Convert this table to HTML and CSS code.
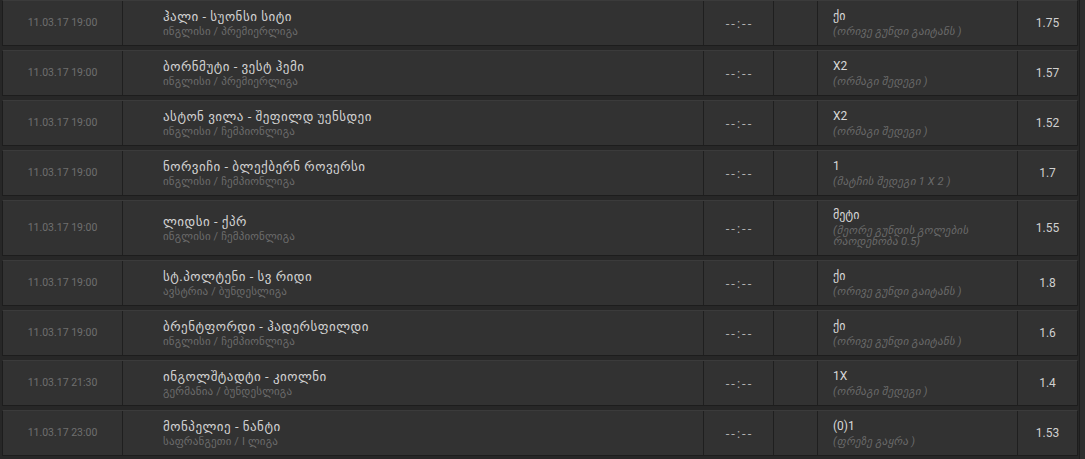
FILE: index.html
```html
<!DOCTYPE html>
<html lang="ka">
<head>
<meta charset="utf-8">
<title>Matches</title>
<link rel="stylesheet" href="styles.css">
</head>
<body>
<div class="page">
  <div class="table">
    <div class="row">
      <div class="cell date">11.03.17 19:00</div>
      <div class="cell match"><div class="teams">ჰალი - სუონსი სიტი</div><div class="league">ინგლისი / პრემიერლიგა</div></div>
      <div class="cell score">--:--</div>
      <div class="cell empty"></div>
      <div class="cell bet"><div class="pick">ქი</div><div class="desc">(ორივე გუნდი გაიტანს )</div></div>
      <div class="cell odds">1.75</div>
    </div>
    <div class="row">
      <div class="cell date">11.03.17 19:00</div>
      <div class="cell match"><div class="teams">ბორნმუტი - ვესტ ჰემი</div><div class="league">ინგლისი / პრემიერლიგა</div></div>
      <div class="cell score">--:--</div>
      <div class="cell empty"></div>
      <div class="cell bet"><div class="pick">X2</div><div class="desc">(ორმაგი შედეგი )</div></div>
      <div class="cell odds">1.57</div>
    </div>
    <div class="row">
      <div class="cell date">11.03.17 19:00</div>
      <div class="cell match"><div class="teams">ასტონ ვილა - შეფილდ უენსდეი</div><div class="league">ინგლისი / ჩემპიონლიგა</div></div>
      <div class="cell score">--:--</div>
      <div class="cell empty"></div>
      <div class="cell bet"><div class="pick">X2</div><div class="desc">(ორმაგი შედეგი )</div></div>
      <div class="cell odds">1.52</div>
    </div>
    <div class="row">
      <div class="cell date">11.03.17 19:00</div>
      <div class="cell match"><div class="teams">ნორვიჩი - ბლექბერნ როვერსი</div><div class="league">ინგლისი / ჩემპიონლიგა</div></div>
      <div class="cell score">--:--</div>
      <div class="cell empty"></div>
      <div class="cell bet"><div class="pick">1</div><div class="desc">(მატჩის შედეგი 1 X 2 )</div></div>
      <div class="cell odds">1.7</div>
    </div>
    <div class="row">
      <div class="cell date">11.03.17 19:00</div>
      <div class="cell match"><div class="teams">ლიდსი - ქპრ</div><div class="league">ინგლისი / ჩემპიონლიგა</div></div>
      <div class="cell score">--:--</div>
      <div class="cell empty"></div>
      <div class="cell bet"><div class="pick">მეტი</div><div class="desc">(მეორე გუნდის გოლების<br>რაოდენობა 0.5)</div></div>
      <div class="cell odds">1.55</div>
    </div>
    <div class="row">
      <div class="cell date">11.03.17 19:00</div>
      <div class="cell match"><div class="teams">სტ.პოლტენი - სვ რიდი</div><div class="league">ავსტრია / ბუნდესლიგა</div></div>
      <div class="cell score">--:--</div>
      <div class="cell empty"></div>
      <div class="cell bet"><div class="pick">ქი</div><div class="desc">(ორივე გუნდი გაიტანს )</div></div>
      <div class="cell odds">1.8</div>
    </div>
    <div class="row">
      <div class="cell date">11.03.17 19:00</div>
      <div class="cell match"><div class="teams">ბრენტფორდი - ჰადერსფილდი</div><div class="league">ინგლისი / ჩემპიონლიგა</div></div>
      <div class="cell score">--:--</div>
      <div class="cell empty"></div>
      <div class="cell bet"><div class="pick">ქი</div><div class="desc">(ორივე გუნდი გაიტანს )</div></div>
      <div class="cell odds">1.6</div>
    </div>
    <div class="row">
      <div class="cell date">11.03.17 21:30</div>
      <div class="cell match"><div class="teams">ინგოლშტადტი - კიოლნი</div><div class="league">გერმანია / ბუნდესლიგა</div></div>
      <div class="cell score">--:--</div>
      <div class="cell empty"></div>
      <div class="cell bet"><div class="pick">1X</div><div class="desc">(ორმაგი შედეგი )</div></div>
      <div class="cell odds">1.4</div>
    </div>
    <div class="row">
      <div class="cell date">11.03.17 23:00</div>
      <div class="cell match"><div class="teams">მონპელიე - ნანტი</div><div class="league">საფრანგეთი / I ლიგა</div></div>
      <div class="cell score">--:--</div>
      <div class="cell empty"></div>
      <div class="cell bet"><div class="pick">(0)1</div><div class="desc">(ფრეზე გაყრა )</div></div>
      <div class="cell odds">1.53</div>
    </div>
  </div>
  <div class="scroll"></div>
</div>
</body>
</html>
```

FILE: styles.css
```css
html, body {
  margin: 0;
  padding: 0;
  background: #272727;
  font-family: Roboto, "DejaVu Sans", sans-serif;
  height: 100%;
}
.page {
  display: flex;
  height: 459px;
  overflow: hidden;
}
.table {
  margin-left: 2px;
  width: 1076px;
  display: flex;
  flex-direction: column;
  gap: 4px;
}
.row {
  display: grid;
  grid-template-columns: 119px 581px 70px 44px 200px 60px;
  min-height: 44px;
  background: #323232;
  border-top: 1px solid #3b3b3b;
  border-bottom: 1px solid #1d1d1d;
  border-left: 1px solid #1d1d1d;
  border-right: 1px solid #1d1d1d;
}
.cell {
  display: flex;
  flex-direction: column;
  justify-content: center;
  border-left: 1px solid #1f1f1f;
  padding: 7px 0 8px;
  box-sizing: border-box;
}
.cell:first-child { border-left: none; }
.date {
  align-items: center;
  color: #6f6f6f;
  font-size: 10.5px;
}
.match { padding-left: 40px; }
.teams {
  color: #d2d2d2;
  font-size: 13px;
  letter-spacing: 0.5px;
  line-height: 15px;
}
.league {
  color: #6c6c6c;
  font-size: 11px;
  letter-spacing: 0.15px;
  line-height: 11px;
  margin-top: 2px;
}
.score {
  align-items: center;
  color: #b0b0b0;
  font-size: 13px;
  letter-spacing: 2px;
  padding-left: 2px;
  padding-top: 9px;
}
.bet { padding-left: 15px; }
.pick {
  color: #d8d8d8;
  font-size: 12px;
  line-height: 15px;
}
.desc {
  color: #6a6a6a;
  font-size: 11px;
  font-style: italic;
  letter-spacing: 0.2px;
  line-height: 11px;
  margin-top: 2px;
}
.odds {
  align-items: center;
  color: #d0d0d0;
  font-size: 12px;
}
.scroll {
  margin-left: 1px;
  width: 6px;
  background: #2e2e2e;
  border-left: 1px solid #1d1d1d;
}
```
